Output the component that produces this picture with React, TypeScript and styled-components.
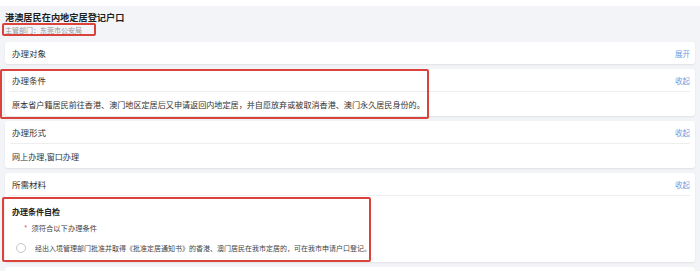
import { createGlobalStyle } from "styled-components";
import styled from "styled-components";

const GlobalStyle = createGlobalStyle`
  html, body {
    margin: 0;
    padding: 0;
    background: #fff;
  }
  body {
    font-family: "Noto Sans CJK SC", "Noto Sans", sans-serif;
    color: #333;
  }
`;

type Section = {
  title: string;
  expanded: boolean;
  body?: string;
};

const sections: Section[] = [
  { title: "办理对象", expanded: false },
  {
    title: "办理条件",
    expanded: true,
    body: "原本省户籍居民前往香港、澳门地区定居后又申请返回内地定居，并自愿放弃或被取消香港、澳门永久居民身份的。",
  },
  { title: "办理形式", expanded: true, body: "网上办理,窗口办理" },
];

function SectionCard({ section }: { section: Section }) {
  return (
    <Card>
      <CardHeader>
        <CardTitle>{section.title}</CardTitle>
        <Toggle>{section.expanded ? "收起" : "展开"}</Toggle>
      </CardHeader>
      {section.expanded && section.body && (
        <CardBody>
          <BodyText>{section.body}</BodyText>
        </CardBody>
      )}
    </Card>
  );
}

export default function App() {
  return (
    <Root>
      <GlobalStyle />
      <Page>
        <Heading>
          <Title>港澳居民在内地定居登记户口</Title>
          <Dept>主管部门：东莞市公安局</Dept>
        </Heading>
        <CardList>
          {sections.map((s) => (
            <SectionCard key={s.title} section={s} />
          ))}
          <Card>
            <CardHeader>
              <CardTitle>所需材料</CardTitle>
              <Toggle>收起</Toggle>
            </CardHeader>
            <CheckPanel>
              <CheckTitle>办理条件自检</CheckTitle>
              <Required>
                <Star>*</Star>须符合以下办理条件
              </Required>
              <OptionRow>
                <Radio />
                <OptionText>
                  经出入境管理部门批准并取得《批准定居通知书》的香港、澳门居民在我市定居的，可在我市申请户口登记。
                </OptionText>
              </OptionRow>
            </CheckPanel>
          </Card>
          <StubCard />
        </CardList>
      </Page>
      <Mark style={{ left: 2, top: 23, width: 94, height: 13 }} />
      <Mark style={{ left: 0, top: 69, width: 429, height: 50 }} />
      <Mark style={{ left: 2, top: 197, width: 369, height: 65 }} />
    </Root>
  );
}

const Root = styled.div`
  position: relative;
  width: 700px;
  height: 271px;
  overflow: hidden;
  padding-top: 6px;
  box-sizing: border-box;
`;

const Page = styled.div`
  background: #f2f4f7;
  padding: 5px 5px 0 5px;
  height: 100%;
  box-sizing: border-box;
`;

const Heading = styled.div`
  margin-bottom: 7px;
`;

const Title = styled.div`
  font-size: 9.2px;
  line-height: 12px;
  font-weight: 700;
  color: #1f1f1f;
`;

const Dept = styled.div`
  margin-top: 2px;
  font-size: 7px;
  line-height: 10px;
  color: #9a9a9a;
`;

const CardList = styled.div`
  display: flex;
  flex-direction: column;
  gap: 5px;
`;

const Card = styled.div`
  background: #fff;
  border-radius: 3px;
  padding: 0 5px;
  box-shadow: 0 1px 2px rgba(0, 0, 0, 0.08);
`;

const StubCard = styled(Card)`
  height: 22px;
`;

const CardHeader = styled.div`
  display: flex;
  align-items: center;
  justify-content: space-between;
  height: 22px;
  padding-left: 2px;
`;

const CardTitle = styled.span`
  font-size: 8.5px;
  color: #333;
`;

const Toggle = styled.span`
  font-size: 7.5px;
  color: #6f9ade;
`;

const CardBody = styled.div`
  border-top: 1px solid #eeeeee;
  height: 24px;
  display: flex;
  align-items: center;
  padding-left: 2px;
`;

const BodyText = styled.span`
  font-size: 8.1px;
  color: #333;
  white-space: nowrap;
`;

const CheckPanel = styled.div`
  border-top: 1px solid #eeeeee;
  margin-bottom: 5px;
  padding: 10px 2px 2px 2px;
`;

const CheckTitle = styled.div`
  font-size: 8px;
  line-height: 12px;
  font-weight: 700;
  color: #222;
`;

const Required = styled.div`
  margin-top: 4px;
  padding-left: 12px;
  font-size: 7.3px;
  line-height: 12px;
  color: #444;
`;

const Star = styled.span`
  color: #e0463c;
  margin-right: 4px;
`;

const OptionRow = styled.div`
  display: flex;
  align-items: center;
  gap: 9px;
  height: 14px;
  margin-top: 7px;
  padding-left: 4px;
`;

const Radio = styled.span`
  width: 8px;
  height: 8px;
  border: 1px solid #c8c8c8;
  border-radius: 50%;
  background: #fff;
  flex: none;
`;

const OptionText = styled.span`
  font-size: 7px;
  color: #444;
  white-space: nowrap;
`;

const Mark = styled.div`
  position: absolute;
  border: 2px solid #d9433b;
  border-radius: 2px;
  box-sizing: border-box;
  pointer-events: none;
`;
